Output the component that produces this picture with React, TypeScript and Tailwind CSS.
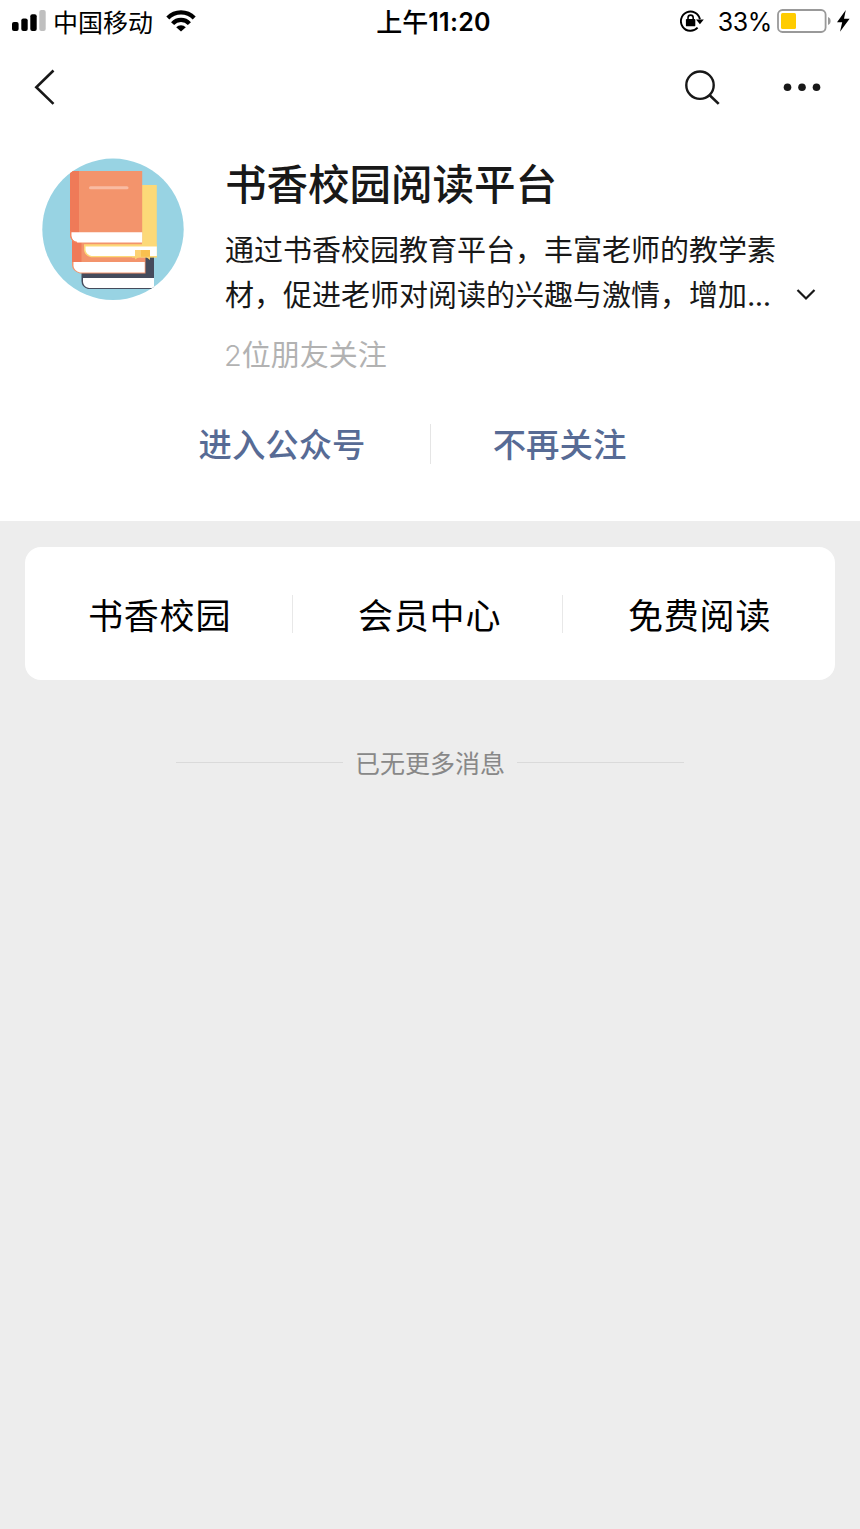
import React from "react";

function SignalIcon() {
  return (
    <svg width="34" height="22" viewBox="0 0 34 22" className="shrink-0">
      <rect x="0" y="12" width="6.6" height="9" rx="2" fill="#000" />
      <rect x="9.3" y="8.5" width="6.4" height="12.5" rx="2" fill="#000" />
      <rect x="18.3" y="4.2" width="6.4" height="16.8" rx="2" fill="#000" />
      <rect x="27.3" y="0" width="6.4" height="21" rx="2" fill="#bfbfbf" />
    </svg>
  );
}

function WifiIcon() {
  return (
    <svg width="30" height="22" viewBox="0 0 30 22" className="shrink-0">
      <g fill="none" stroke="#000" strokeWidth="4.2">
        <path d="M1.8 8 A18.5 18.5 0 0 1 28.2 8" />
        <path d="M6.6 13.6 A11.4 11.4 0 0 1 23.4 13.6" />
      </g>
      <path d="M15 21.6 L10.2 17.2 A6.8 6.8 0 0 1 19.8 17.2 Z" fill="#000" />
    </svg>
  );
}

function RotationLockIcon() {
  return (
    <svg width="24" height="22" viewBox="0 0 24 22" className="shrink-0">
      <path d="M17.6 17.7 A9.6 9.6 0 1 1 19.9 9.2" fill="none" stroke="#000" strokeWidth="1.9" />
      <path d="M16 9.6 H23.8 L19.9 14.2 Z" fill="#000" />
      <rect x="5.9" y="8.9" width="9.4" height="7.4" rx="0.9" fill="#000" />
      <path d="M8 10 V7.7 A2.6 2.6 0 0 1 13.2 7.7 V10" fill="none" stroke="#000" strokeWidth="1.6" />
    </svg>
  );
}

function BatteryIcon() {
  return (
    <svg width="54" height="24" viewBox="0 0 54 24" className="shrink-0">
      <rect x="1" y="1" width="47.6" height="22" rx="4.5" fill="#fff" stroke="#999" strokeWidth="1.8" />
      <rect x="4" y="4" width="15" height="16" rx="1.5" fill="#ffcc00" />
      <path d="M51 8 C54.5 9.3 54.5 14.7 51 16 Z" fill="#999" />
    </svg>
  );
}

function BoltIcon() {
  return (
    <svg width="14" height="22" viewBox="0 0 14 22" className="shrink-0">
      <path d="M9.8 0 L1 12.2 H6.2 L4 21.8 L13.6 8.8 H8 Z" fill="#000" />
    </svg>
  );
}

function BooksAvatar() {
  return (
    <svg width="142" height="142" viewBox="0 0 142 142" className="shrink-0">
      <defs>
        <clipPath id="avatar">
          <circle cx="71" cy="71.3" r="70.7" />
        </clipPath>
      </defs>
      <g clipPath="url(#avatar)">
        <rect width="142" height="142" fill="#98d3e3" />
        <path d="M39.5 110 H112 V131 H46 Q39.5 129 39.5 123 Z" fill="#454b5c" />
        <rect x="100" y="96" width="12" height="24" fill="#454b5c" />
        <path d="M41 120 H112 V130 H47 Q41.5 129 41 124 Z" fill="#fff" />
        <path d="M30 80 H103.5 V115.5 H38 Q30 113 30 107 Z" fill="#f3946c" />
        <path d="M31.5 104 H102.7 V114.4 H38 Q32 113 31.5 108 Z" fill="#fff" />
        <path d="M90 27 H114.8 V99.5 H90 Z" fill="#fcd978" />
        <path d="M30 80 H100 V87.5 H42 V104 H30 Z" fill="#f3946c" />
        <path d="M30 80 H39.5 V104 H30 Z" fill="#ef7a58" />
        <path d="M42 86.2 H114.8 V99.3 H49 Q42.5 97.5 42 92 Z" fill="#fcd978" />
        <path d="M43.5 88.5 H114.8 V98 H49.5 Q44 96.5 43.5 92 Z" fill="#fff" />
        <path d="M93 92 H108 V102 L104.2 99 H97 L93 101.5 Z" fill="#fcd173" />
        <path d="M99 92 H108 V98.8 H99 Z" fill="#f9c04f" />
        <path d="M28 13 H100.2 V84.5 H35 Q28 83 28 77 Z" fill="#f3946c" />
        <path d="M28 13 H37 V75 H28 Z" fill="#ef7a58" />
        <path d="M29.2 74.2 H100.2 V84.5 H35.5 Q29.7 83 29.2 78.5 Z" fill="#fff" />
        <path d="M28.7 73 V77.5 Q29.5 83.6 35 84.5" fill="none" stroke="#f3845f" strokeWidth="1.3" />
        <rect x="47" y="28.3" width="39.5" height="3" rx="1.5" fill="#f9bba2" />
      </g>
    </svg>
  );
}

function StatusBar() {
  return (
    <div className="grid h-11 grid-cols-[1fr_auto_1fr] items-center text-black">
      <div className="flex items-center pb-[2px] pl-3">
        <SignalIcon />
        <span className="ml-[7px] text-[25px] leading-[40px]">中国移动</span>
        <span className="ml-[13px] flex pb-px">
          <WifiIcon />
        </span>
      </div>
      <div className="flex items-center pb-[2px] pl-[7px] font-medium">
        <span className="text-[26px] leading-[38px]">上午</span>
        <span className="pt-[2px] font-[Inter] text-[25px] leading-[38px] font-semibold tracking-[0.3px]">11:20</span>
      </div>
      <div className="flex items-center justify-end pr-[10px] pb-[2px]">
        <RotationLockIcon />
        <span className="ml-[14px] pt-px font-[Inter] text-[25px] leading-[40px] tracking-[-0.4px]">33%</span>
        <span className="ml-[5px] flex">
          <BatteryIcon />
        </span>
        <span className="ml-[5px] flex">
          <BoltIcon />
        </span>
      </div>
    </div>
  );
}

function NavBar() {
  return (
    <div className="flex h-[86px] items-center justify-between pr-[39px] pl-[34px]">
      <svg width="22" height="36" viewBox="0 0 22 36">
        <path d="M19.5 1.5 L2.3 18.2 L19.5 34.9" fill="none" stroke="#181818" strokeWidth="2.6" />
      </svg>
      <div className="flex items-center">
        <svg width="36" height="36" viewBox="0 0 36 36">
          <circle cx="16" cy="16.2" r="13.7" fill="none" stroke="#181818" strokeWidth="2.4" />
          <path d="M25.7 26.3 L34.7 34.9" stroke="#181818" strokeWidth="2.6" />
        </svg>
        <svg width="40" height="10" viewBox="0 0 40 10" className="ml-[61px]">
          <circle cx="6.5" cy="5.2" r="3.8" fill="#181818" />
          <circle cx="21" cy="5.2" r="3.8" fill="#181818" />
          <circle cx="35.5" cy="5.2" r="3.8" fill="#181818" />
        </svg>
      </div>
    </div>
  );
}

function Profile() {
  return (
    <section className="flex h-[260px] pt-7 pl-[42px]">
      <BooksAvatar />
      <div className="ml-[41px] w-[610px]">
        <h1 className="h-[54px] text-[41.5px] leading-[48px] font-medium whitespace-nowrap text-[#181818]">书香校园阅读平台</h1>
        <div className="mt-[14px] text-[29px] leading-[45px] whitespace-nowrap text-[#181818]">
          <p>通过书香校园教育平台，丰富老师的教学素</p>
          <div className="flex items-center">
            <p>
              材，促进老师对阅读的兴趣与激情，增加<span className="font-[Inter] tracking-[-0.5px]">...</span>
            </p>
            <svg width="20" height="12" viewBox="0 0 20 12" className="ml-[25px]">
              <path d="M1.5 1 L10 9.5 L18.5 1" fill="none" stroke="#181818" strokeWidth="2.2" />
            </svg>
          </div>
        </div>
        <p className="-ml-px mt-[13px] text-[29px] leading-[44px] text-[#b2b2b2]">
          <span className="font-[Inter] font-light">2</span>位朋友关注
        </p>
      </div>
    </section>
  );
}

function Actions() {
  return (
    <div className="flex h-[131px] pt-[33px] text-[33.4px] leading-[40px] font-medium text-[#576b95]">
      <button className="h-10 w-[430px] pl-[134px] whitespace-nowrap">进入公众号</button>
      <div className="mt-px h-10 w-px bg-[#e5e5e5]" />
      <button className="h-10 w-[429px] pr-[172px] whitespace-nowrap">不再关注</button>
    </div>
  );
}

const menu = ["书香校园", "会员中心", "免费阅读"];

export default function App() {
  return (
    <main className="min-h-[1529px] w-[860px] overflow-hidden bg-[#ededed] font-['Noto_Sans_CJK_SC',sans-serif]">
      <header className="h-[521px] bg-white">
        <StatusBar />
        <NavBar />
        <Profile />
        <Actions />
      </header>
      <nav className="mx-[25px] mt-[26px] flex h-[133px] items-center rounded-2xl bg-white text-[35px] leading-[38px] tracking-[0.8px] text-black">
        {menu.map((label, i) => (
          <React.Fragment key={label}>
            {i > 0 && <div className="h-[38px] w-px bg-[#e8e8e8]" />}
            <div className={i === 0 ? "w-[267px] pl-[63px]" : i === 1 ? "w-[269px] pl-[65px]" : "pl-[65px]"}>{label}</div>
          </React.Fragment>
        ))}
      </nav>
      <div className="mt-[62px] flex h-10 items-center justify-center">
        <div className="h-px w-[167px] bg-[#dadada]" />
        <span className="mr-3 ml-3 text-[25px] leading-[40px] text-[#888]">已无更多消息</span>
        <div className="h-px w-[167px] bg-[#dadada]" />
      </div>
    </main>
  );
}
